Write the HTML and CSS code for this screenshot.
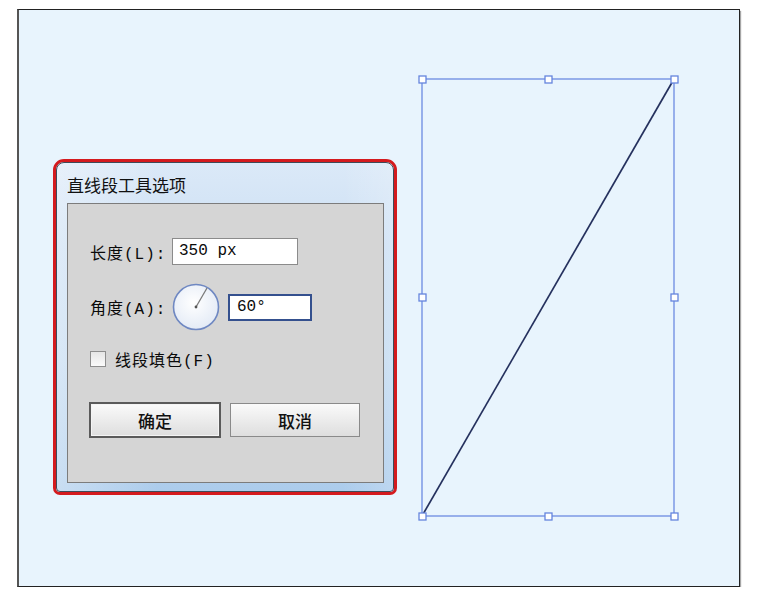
FILE: index.html
```html
<!DOCTYPE html>
<html lang="zh-CN">
  <head>
    <meta charset="UTF-8" />
    <meta name="viewport" content="width=device-width, initial-scale=1.0" />
    <title>直线段工具选项</title>
    <link rel="stylesheet" href="styles.css">
  </head>
  <body>
    <div class="frame">

      <!-- 对话框 -->
      <div class="dialog">
        <div class="window">
          <div class="title">直线段工具选项</div>
          <div class="panel">
            <div class="row">
              <span class="label">长度(L):</span>
              <div class="field field-length">350 px</div>
            </div>
            <div class="row row-angle">
              <span class="label">角度(A):</span>
              <svg class="dial" width="48" height="48" viewBox="0 0 48 48">
                <defs>
                  <radialGradient id="dialFill" cx="0.45" cy="0.4" r="0.6">
                    <stop offset="0" stop-color="#ffffff" />
                    <stop offset="1" stop-color="#e4ebf6" />
                  </radialGradient>
                </defs>
                <circle cx="24" cy="24" r="22.5" fill="url(#dialFill)" stroke="#6f88c2" stroke-width="1.6" />
                <line x1="24" y1="24" x2="35" y2="5" stroke="#7a7a7a" stroke-width="1.3" />
                <circle cx="24" cy="24" r="1.4" fill="#555" />
              </svg>
              <div class="field field-angle">60°</div>
            </div>
            <div class="row row-check">
              <span class="checkbox"></span>
              <span class="check-label">线段填色(F)</span>
            </div>
            <div class="buttons">
              <button class="btn btn-default">确定</button>
              <button class="btn">取消</button>
            </div>
          </div>
        </div>
      </div>

      <!-- 画布上的线段和选择框 -->
      <svg class="artwork" width="720" height="576" viewBox="19 10 720 576">
        <rect x="422" y="79" width="252" height="437" fill="none" stroke="#6c8be2" stroke-width="1.3" />
        <line x1="674" y1="79" x2="422" y2="516" stroke="#25315e" stroke-width="1.7" />
        <g fill="#ffffff" stroke="#6585de" stroke-width="1.3">
          <rect x="419" y="76" width="7" height="7" />
          <rect x="545" y="76" width="7" height="7" />
          <rect x="671" y="76" width="7" height="7" />
          <rect x="419" y="294" width="7" height="7" />
          <rect x="671" y="294" width="7" height="7" />
          <rect x="419" y="513" width="7" height="7" />
          <rect x="545" y="513" width="7" height="7" />
          <rect x="671" y="513" width="7" height="7" />
        </g>
      </svg>
    </div>
  </body>
</html>
```

FILE: styles.css
```css
body {
  margin: 0;
  background-color: #ffffff;
  font-family: "Liberation Mono", "Noto Sans CJK SC", monospace;
  color: #0a0a0a;
}
.frame {
  position: relative;
  box-sizing: border-box;
  width: 723px;
  height: 578px;
  margin: 9px 0 0 17px;
  padding: 149px 0 0 34px;
  background-color: #e8f4fd;
  border: 1px solid #222222;
  border-left: 2px solid #555555;
  box-shadow: 1px 2px 1px rgba(0, 0, 0, 0.35);
}
.artwork {
  position: absolute;
  left: 0;
  top: 0;
}

.dialog {
  width: 344px;
  height: 336px;
  box-sizing: border-box;
  border: 3px solid #d41a1e;
  border-radius: 11px 11px 7px 7px;
  position: relative;
  z-index: 1;
}
.window {
  height: 100%;
  box-sizing: border-box;
  border: 1px solid #3f4a58;
  border-radius: 8px 8px 4px 4px;
  padding: 0 9px 8px 10px;
  background: linear-gradient(90deg, rgba(255, 255, 255, 0.35), rgba(255, 255, 255, 0) 30%, rgba(255, 255, 255, 0) 85%, rgba(255, 255, 255, 0.2)),
    linear-gradient(#dbe9f8 0%, #cde0f4 25%, #c4dbf1 60%, #acccec 100%);
}
.title {
  height: 40px;
  box-sizing: border-box;
  padding-top: 11px;
  font-family: "Noto Sans CJK SC", sans-serif;
  font-size: 17px;
  line-height: 22px;
  color: #111111;
}
.panel {
  height: 280px;
  box-sizing: border-box;
  border: 1px solid #7c7c7c;
  background-color: #d5d5d5;
  padding: 34px 0 0 22px;
}

.row {
  display: flex;
  align-items: center;
  height: 27px;
}
.label {
  width: 78px;
  font-size: 16px;
  letter-spacing: 1px;
}
.field {
  box-sizing: border-box;
  height: 27px;
  background-color: #ffffff;
  font-size: 16px;
  line-height: 25px;
}
.field-length {
  width: 126px;
  margin-left: 4px;
  border: 1px solid #8b8b8b;
  padding-left: 6px;
}
.row-angle {
  height: 48px;
  margin-top: 18px;
}
.dial {
  margin-left: 4px;
}
.field-angle {
  width: 84px;
  margin-left: 8px;
  border: 2px solid #34508e;
  padding-left: 7px;
  line-height: 23px;
}
.row-check {
  height: 20px;
  margin-top: 18px;
}
.checkbox {
  width: 16px;
  height: 16px;
  box-sizing: border-box;
  border: 1px solid #8e8e8e;
  background: linear-gradient(#e6e6e6, #fbfbfb);
}
.check-label {
  margin-left: 9px;
  font-size: 16px;
  letter-spacing: 1px;
}

.buttons {
  display: flex;
  align-items: center;
  margin-top: 33px;
  margin-left: -1px;
}
.btn {
  box-sizing: border-box;
  width: 130px;
  height: 34px;
  margin-left: 9px;
  border: 1px solid #8a8a8a;
  background: linear-gradient(#fafafa, #ececec 50%, #dedede);
  font-family: "Noto Sans CJK SC", sans-serif;
  font-size: 17px;
  font-weight: 500;
  color: #111111;
  padding: 0;
}
.btn-default {
  width: 132px;
  height: 36px;
  margin-left: 0;
  border: 2px solid #5a5a5a;
  box-shadow: inset 0 0 0 1px #f4f4f4;
}
```
